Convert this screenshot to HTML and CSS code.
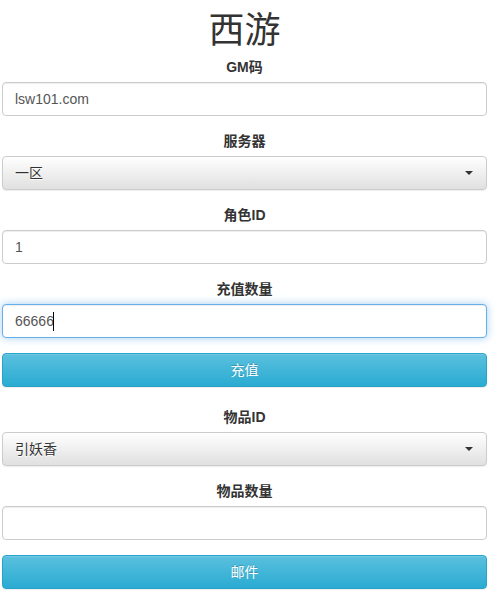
FILE: index.html
```html
<!DOCTYPE html>
<html lang="zh-CN">
<head>
<meta charset="utf-8">
<title>西游</title>
<link rel="stylesheet" href="styles.css">
</head>
<body>
<div class="page">
  <h1 class="title">西游</h1>
  <form class="form">
    <div class="form-group">
      <label class="label">GM码</label>
      <input class="form-control" type="text" value="lsw101.com">
    </div>
    <div class="form-group">
      <label class="label">服务器</label>
      <div class="select"><span>一区</span><span class="caret"></span></div>
    </div>
    <div class="form-group">
      <label class="label">角色ID</label>
      <input class="form-control" type="text" value="1">
    </div>
    <div class="form-group">
      <label class="label">充值数量</label>
      <div class="form-control focused"><span>66666</span><span class="cursor"></span></div>
    </div>
    <div class="btn-group">
      <button type="button" class="btn">充值</button>
    </div>
    <div class="form-group">
      <label class="label">物品ID</label>
      <div class="select"><span>引妖香</span><span class="caret"></span></div>
    </div>
    <div class="form-group">
      <label class="label">物品数量</label>
      <input class="form-control" type="text" value="">
    </div>
    <div class="btn-group">
      <button type="button" class="btn">邮件</button>
    </div>
  </form>
</div>
</body>
</html>
```
FILE: styles.css
```css
* { box-sizing: border-box; }
html, body { margin: 0; padding: 0; background: #fff; }
body {
  font-family: "Liberation Sans", "Noto Sans CJK SC", sans-serif;
  font-size: 14px;
  line-height: 20px;
  color: #333;
}
.page {
  width: 485px;
  margin-left: 2px;
  padding-top: 7px;
}
.title {
  margin: 0 0 10px;
  font-size: 36px;
  line-height: 40px;
  font-weight: 400;
  text-align: center;
  color: #333;
  font-family: "Noto Sans CJK SC", sans-serif;
}
.form { margin: 0; }
.form-group {
  margin-bottom: 15px;
  display: flex;
  flex-direction: column;
}
.label {
  display: block;
  text-align: center;
  font-weight: 700;
  margin-bottom: 5px;
  line-height: 20px;
  color: #333;
}
.form-control {
  display: flex;
  align-items: center;
  width: 100%;
  height: 34px;
  padding: 6px 12px;
  font-family: inherit;
  font-size: 14px;
  line-height: 20px;
  color: #555;
  background: #fff;
  border: 1px solid #ccc;
  border-radius: 4px;
  box-shadow: inset 0 1px 1px rgba(0,0,0,.075);
  outline: none;
}
.form-control.focused {
  border-color: #66afe9;
  box-shadow: inset 0 1px 1px rgba(0,0,0,.075), 0 0 8px rgba(102,175,233,.6);
}
.cursor {
  display: inline-block;
  width: 1px;
  height: 19px;
  background: #000;
  margin-left: -1px;
}
.select {
  display: flex;
  align-items: center;
  justify-content: space-between;
  height: 34px;
  padding: 6px 13px 6px 12px;
  color: #333;
  border: 1px solid #ccc;
  border-radius: 4px;
  background-image: linear-gradient(to bottom, #fff 0, #e0e0e0 100%);
  text-shadow: 0 1px 0 #fff;
  box-shadow: inset 0 1px 0 rgba(255,255,255,.15), 0 1px 1px rgba(0,0,0,.075);
}
.caret {
  width: 0;
  height: 0;
  border-top: 4px solid #333;
  border-left: 4px solid transparent;
  border-right: 4px solid transparent;
}
.btn-group {
  margin-bottom: 20px;
}
.btn {
  display: block;
  width: 100%;
  height: 34px;
  padding: 6px 12px;
  font-family: inherit;
  font-size: 14px;
  line-height: 20px;
  color: #fff;
  text-align: center;
  border: 1px solid #28a4c9;
  border-radius: 4px;
  background-image: linear-gradient(to bottom, #5bc0de 0, #2aabd2 100%);
  text-shadow: 0 -1px 0 rgba(0,0,0,.2);
  box-shadow: inset 0 1px 0 rgba(255,255,255,.15), 0 1px 1px rgba(0,0,0,.075);
  cursor: pointer;
}
```
